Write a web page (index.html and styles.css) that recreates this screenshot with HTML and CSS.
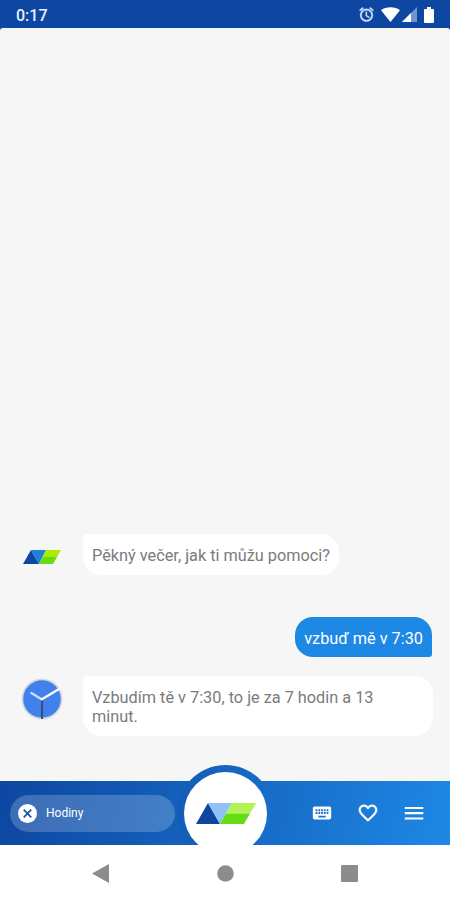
FILE: index.html
```html
<!DOCTYPE html>
<html lang="cs">
<head>
  <meta charset="UTF-8" />
  <meta name="viewport" content="width=device-width, initial-scale=1.0"/>
  <title>Asistent</title>
  <link rel="stylesheet" href="styles.css">
</head>
<body>

  <div class="screen">
    <header class="status-bar">
      <span class="time">0:17</span>
      <div class="status-icons">
        <svg class="alarm" width="17" height="17" viewBox="0 0 24 24" fill="#dce8fa" stroke="#dce8fa" stroke-width="0.5"><path d="M22 5.700l-4.600-3.900-1.300 1.500 4.600 3.900L22 5.700zM7.900 3.400L6.600 1.900 2 5.700l1.300 1.500 4.600-3.800zM12.500 8H11v6l4.700 2.900.8-1.300-4-2.300V8zM12 4a9 9 0 1 0 0 18 9 9 0 0 0 0-18zm0 16a7 7 0 1 1 0-14 7 7 0 0 1 0 14z"/></svg>
        <svg class="wifi" width="19" height="15" viewBox="0 0 19 15" fill="#fff"><path d="M9.500 15L0 3.200C5.300-.6 13.700-.6 19 3.200z"/></svg>
        <svg class="signal" width="15" height="15" viewBox="0 0 15 15"><path d="M0 15L15 0v15z" fill="#6f95d2"/><path d="M0 15L9 6v9z" fill="#fff"/></svg>
        <svg class="battery" width="10" height="16" viewBox="0 0 10 16" fill="#fff"><path d="M3 0h4v2h2q1 0 1 1v12q0 1-1 1H1q-1 0-1-1V3q0-1 1-1h2z"/></svg>
      </div>
    </header>

    <main class="chat">
      <div class="row">
        <div class="avatar">
          <svg width="38" height="14" viewBox="0 0 38 14">
            <path d="M0 14L8 0l8 14z" fill="#0d47a1"/>
            <path d="M8 0h15l-7 14z" fill="#1e80dc"/>
            <path d="M23 0h15l-4 7H19.500z" fill="#aeea00"/>
            <path d="M19.500 7H34l-4 7H16z" fill="#64dd17"/>
          </svg>
        </div>
        <div class="bubble">Pěkný večer, jak ti můžu pomoci?</div>
      </div>

      <div class="row user">
        <div class="bubble">vzbuď mě v 7:30</div>
      </div>

      <div class="row">
        <div class="avatar">
          <svg width="44" height="44" viewBox="0 0 44 44">
            <circle cx="22" cy="22" r="20.500" fill="#d3d9df"/>
            <circle cx="22" cy="22" r="18.800" fill="#4081ec"/>
            <path d="M22 22v20" stroke="#32455f" stroke-width="1.700"/>
            <path d="M10.500 15.500L22 22.500" stroke="#cfe0fb" stroke-width="2.200"/>
            <path d="M21 22.700l18.500-11" stroke="#fff" stroke-width="2.200"/>
          </svg>
        </div>
        <div class="bubble wide">Vzbudím tě v 7:30, to je za 7 hodin a 13 minut.</div>
      </div>
    </main>

    <div class="toolbar">
      <div class="chip">
        <svg width="19" height="19" viewBox="0 0 19 19">
          <circle cx="9.500" cy="9.500" r="9.500" fill="#fff"/>
          <path d="M5.700 5.700l7.600 7.600M13.300 5.700l-7.600 7.600" stroke="#1854ad" stroke-width="1.700"/>
        </svg>
        <span>Hodiny</span>
      </div>

      <div class="actions">
        <svg width="22" height="22" viewBox="0 0 24 24" fill="#fff"><path d="M20 5H4c-1.100 0-2 .9-2 2v10c0 1.100.9 2 2 2h16c1.100 0 2-.9 2-2V7c0-1.100-.9-2-2-2zm-9 3h2v2h-2V8zm0 3h2v2h-2v-2zM8 8h2v2H8V8zm0 3h2v2H8v-2zm-1 2H5v-2h2v2zm0-3H5V8h2v2zm9 7H8v-2h8v2zm0-4h-2v-2h2v2zm0-3h-2V8h2v2zm3 3h-2v-2h2v2zm0-3h-2V8h2v2z"/></svg>
        <svg width="22" height="22" viewBox="0 0 24 24" fill="#fff" stroke="#fff" stroke-width="0.4"><path d="M16.500 3c-1.740 0-3.410.81-4.500 2.090C10.910 3.810 9.240 3 7.500 3 4.420 3 2 5.420 2 8.500c0 3.780 3.400 6.860 8.550 11.540L12 21.350l1.450-1.320C18.600 15.360 22 12.280 22 8.500 22 5.420 19.580 3 16.500 3zm-4.400 15.550l-.1.100-.1-.1C7.140 14.240 4 11.390 4 8.500 4 6.500 5.500 5 7.500 5c1.540 0 3.040.99 3.570 2.360h1.870C13.460 5.990 14.960 5 16.500 5c2 0 3.500 1.500 3.500 3.500 0 2.890-3.140 5.740-7.900 10.050z"/></svg>
        <svg width="24" height="24" viewBox="0 0 24 24" fill="#fff"><path d="M2.800 18.500h18.500v-2H2.800v2zm0-5.200h18.500v-2.200H2.800v2.200zm0-7.300v2h18.500V6H2.800z"/></svg>
      </div>

      <div class="mic">
        <div class="mic-ring">
          <div class="mic-button">
            <svg width="60" height="21" viewBox="0 0 60 21">
              <path d="M0 21L12 0l12 21z" fill="#0d47a1"/>
              <path d="M12 0h24L24 21z" fill="#90c2f8"/>
              <path d="M36 0h24l-6 10.500H30z" fill="#b2f454"/>
              <path d="M30 10.500h24L48 21H24z" fill="#64dd17"/>
            </svg>
          </div>
        </div>
      </div>
    </div>

    <nav class="system-nav">
      <svg width="17" height="19" viewBox="0 0 17 19" fill="#8c8c8c"><path d="M0 9.500L17 0v19z"/></svg>
      <svg width="17" height="17" viewBox="0 0 17 17" fill="#8c8c8c"><circle cx="8.500" cy="8.500" r="8.300"/></svg>
      <svg width="17" height="17" viewBox="0 0 17 17" fill="#8c8c8c"><rect width="17" height="17" rx="1"/></svg>
    </nav>
  </div>

</body>
</html>
```
FILE: styles.css
```css
* {
  margin: 0;
  padding: 0;
  box-sizing: border-box;
}

body {
  font-family: Roboto, "Noto Sans", sans-serif;
  background: #0d47a1;
}

svg {
  display: block;
  flex-shrink: 0;
}

.screen {
  width: 450px;
  height: 900px;
  display: flex;
  flex-direction: column;
  overflow: hidden;
}

.status-bar {
  height: 28px;
  padding: 1px 16px 0;
  display: flex;
  align-items: center;
  justify-content: space-between;
  background: #0d47a1;
}

.time {
  padding-top: 2px;
  font-size: 16px;
  font-weight: 500;
  color: #e8f0fd;
}

.status-icons {
  display: flex;
  align-items: center;
}

.alarm {
  margin-right: -1px;
}

.wifi {
  margin-left: 7px;
}

.signal {
  margin-left: 2px;
}

.battery {
  margin-left: 7px;
}

.chat {
  flex: 1;
  display: flex;
  flex-direction: column;
  justify-content: flex-end;
  padding: 0 17px 45px 20px;
  background: #f6f6f6;
  border-radius: 3px 3px 0 0;
}

.row {
  display: flex;
  align-items: flex-start;
}

.avatar {
  width: 44px;
  height: 46px;
  margin-right: 19px;
  display: flex;
  align-items: center;
  justify-content: center;
}

.bubble {
  padding: 12px 9px 9px;
  font-size: 16.3px;
  line-height: 20px;
  color: #7b7b7b;
  background: #fff;
  border-radius: 4px 18px 18px 18px;
}

.wide {
  width: 350px;
  padding: 12px 45px 10px 9px;
  line-height: 19px;
}

.user {
  justify-content: flex-end;
  margin: 37px 1px 19px 0;
}

.user .bubble {
  height: 40px;
  color: #fff;
  background: #1e88e5;
  border-radius: 18px 18px 3px 18px;
}

.toolbar {
  position: relative;
  height: 64px;
  padding: 0 24px 0 10px;
  display: flex;
  align-items: center;
  justify-content: space-between;
  background: linear-gradient(100deg, #0d47a1, #1565c0 48%, #1e88e5);
}

.chip {
  width: 165px;
  height: 37px;
  padding-left: 8px;
  display: flex;
  align-items: center;
  gap: 9px;
  border-radius: 19px;
  background: rgba(255, 255, 255, 0.2);
  color: #fff;
  font-size: 12px;
}

.actions {
  display: flex;
  align-items: center;
  gap: 23.5px;
}

/* raised button, cut off at the bottom edge of the toolbar */
.mic {
  position: absolute;
  left: 177px;
  bottom: 0;
  width: 97px;
  height: 80px;
  overflow: hidden;
}

.mic-ring {
  width: 97px;
  height: 97px;
  padding: 7px;
  border-radius: 50%;
  background: linear-gradient(90deg, #125cb7, #1565c0 50%, #186fcb);
}

.mic-button {
  height: 83px;
  display: flex;
  align-items: center;
  justify-content: center;
  border-radius: 50%;
  background: #fff;
}

.system-nav {
  height: 55px;
  padding: 1px 92px 0;
  display: flex;
  align-items: center;
  justify-content: space-between;
  background: #fff;
}
```
